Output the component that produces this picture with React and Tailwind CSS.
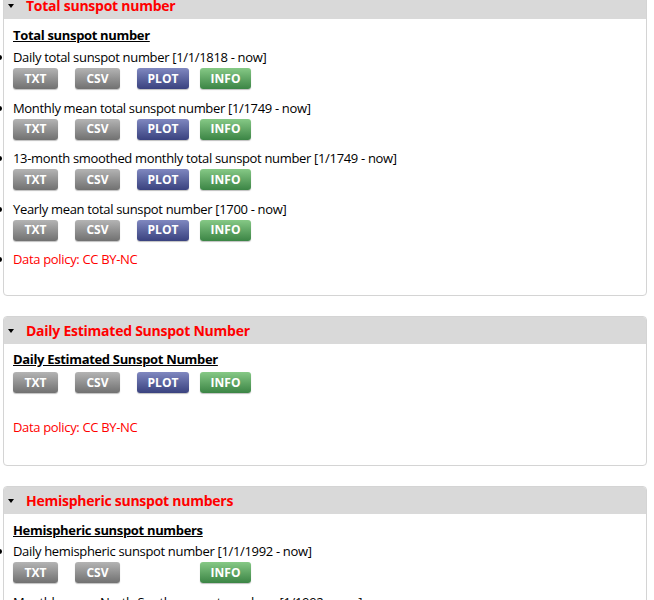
const btnBase = "inline-flex items-center justify-center h-[21px] rounded-[3px] text-white font-bold text-[12px] leading-none tracking-normal shadow-[0_1px_1px_rgba(0,0,0,0.25)]"
const grey = `${btnBase} w-[45px] bg-linear-to-b from-[#b4b4b4] to-[#717171]`
const blue = `${btnBase} w-[52px] bg-linear-to-b from-[#8088c0] to-[#3a427f]`
const green = `${btnBase} w-[51px] bg-linear-to-b from-[#86c986] to-[#3b8545]`

function Buttons({ plot = true }) {
  return (
    <div className="flex h-[21px]">
      <div className="w-[62px]"><span className={grey}>TXT</span></div>
      <div className="w-[62px]"><span className={grey}>CSV</span></div>
      <div className="w-[63px]">{plot && <span className={blue}>PLOT</span>}</div>
      <div><span className={green}>INFO</span></div>
    </div>
  )
}

function Panel({ title, children, className = '' }) {
  return (
    <div className={`border border-[#d4d4d4] rounded-[4px] bg-white ${className}`}>
      <div className="h-[27px] bg-[#d9d9d9] rounded-t-[3px] flex items-center pl-[4px]">
        <span className="w-0 h-0 border-l-[3px] border-r-[3px] border-t-[4px] border-l-transparent border-r-transparent border-t-black mr-[12px]" />
        <h3 className="text-[14px] font-bold text-[#ff0000] leading-none tracking-[-0.25px]">{title}</h3>
      </div>
      <div className="pl-[9px] pr-2">{children}</div>
    </div>
  )
}

function Item({ label, plot }) {
  return (
    <li className="mb-[9.5px]">
      <div className="leading-[19px]">{label}</div>
      <div className="mt-px"><Buttons plot={plot} /></div>
    </li>
  )
}

export default function App() {
  return (
    <div className="min-h-[600px] bg-white text-[13px] tracking-[-0.33px] text-black pl-[3px] pr-[7px] -mt-[9px] overflow-hidden" style={{ fontFamily: '"Open Sans", "Liberation Sans", sans-serif' }}>
      <Panel title="Total sunspot number">
        <h4 className="font-bold underline leading-[19px] pt-[7px] mb-[3px]">Total sunspot number</h4>
        <ul className="list-disc pb-[26px]">
          <Item label="Daily total sunspot number [1/1/1818 - now]" />
          <Item label="Monthly mean total sunspot number [1/1749 - now]" />
          <Item label="13-month smoothed monthly total sunspot number [1/1749 - now]" />
          <Item label="Yearly mean total sunspot number [1700 - now]" />
          <li className="leading-[19px]"><span className="text-[#ff0000]">Data policy: CC BY-NC</span></li>
        </ul>
      </Panel>

      <Panel title="Daily Estimated Sunspot Number" className="mt-[20px]">
        <h4 className="font-bold underline leading-[19px] pt-[6px] mb-[3px]">Daily Estimated Sunspot Number</h4>
        <Buttons />
        <p className="leading-[19px] text-[#ff0000] mt-[25px] pb-[28px]">Data policy: CC BY-NC</p>
      </Panel>

      <Panel title="Hemispheric sunspot numbers" className="mt-[20px]">
        <h4 className="font-bold underline leading-[19px] pt-[7px] mb-[2px]">Hemispheric sunspot numbers</h4>
        <ul className="list-disc">
          <Item label="Daily hemispheric sunspot number [1/1/1992 - now]" plot={false} />
          <Item label="Monthly mean North-South sunspot numbers [1/1992 - now]" />
        </ul>
      </Panel>
    </div>
  )
}
